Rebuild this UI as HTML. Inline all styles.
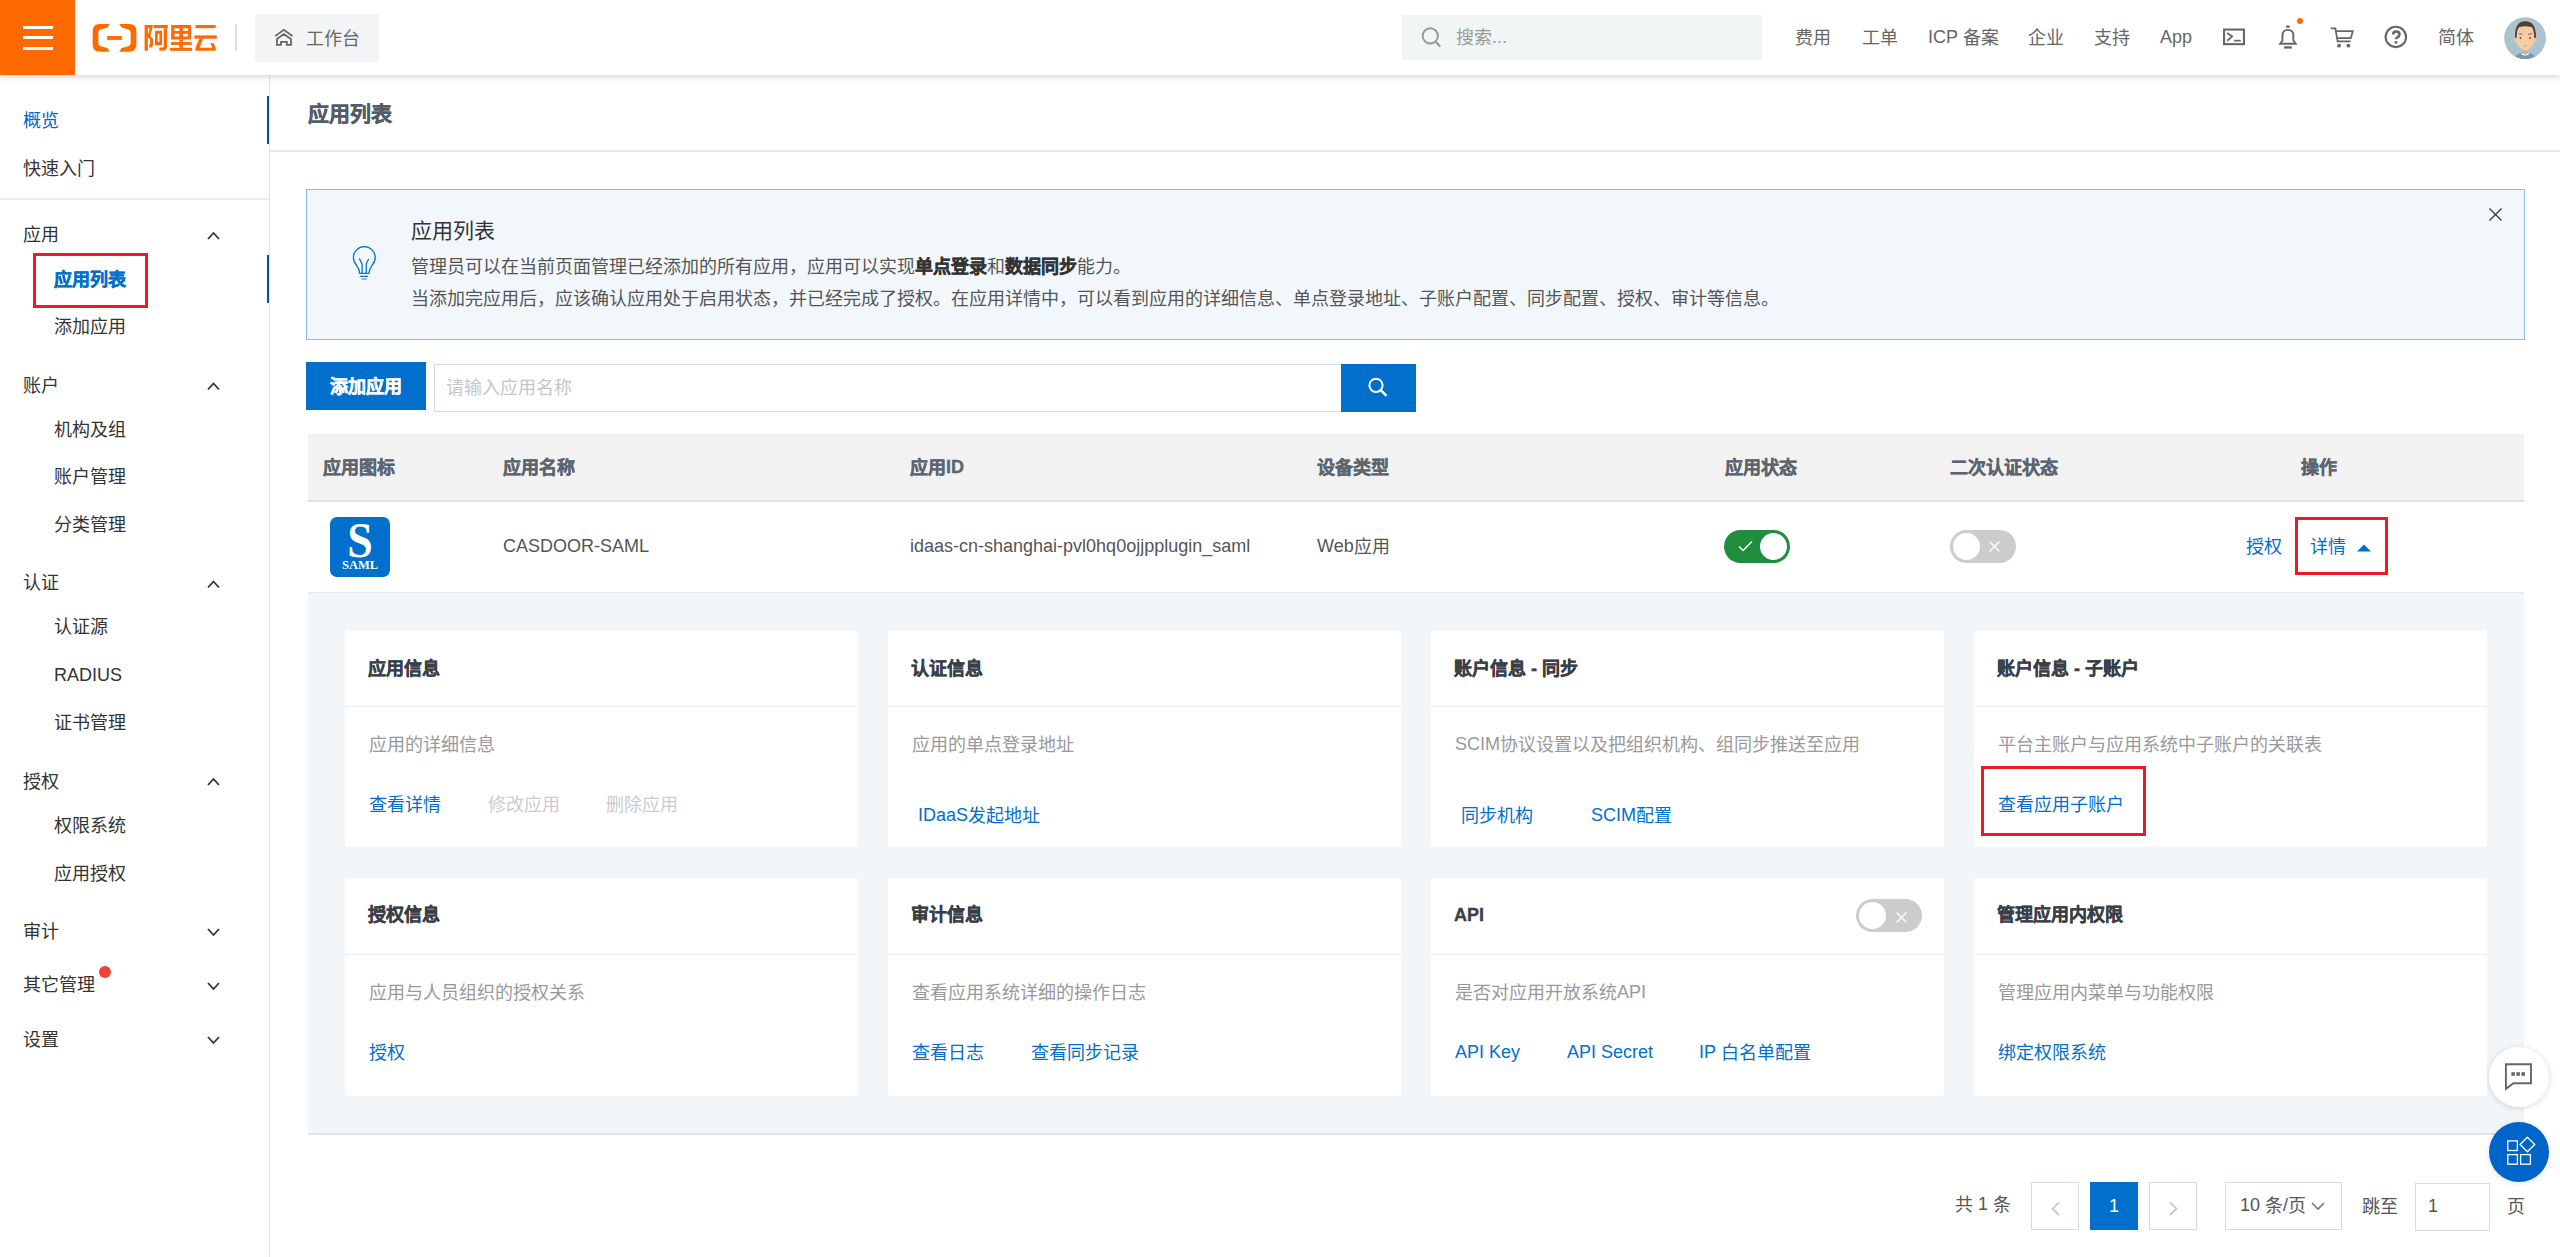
<!DOCTYPE html>
<html lang="zh-CN"><head><meta charset="utf-8">
<style>
*{box-sizing:border-box;margin:0;padding:0}
html,body{width:2560px;height:1257px;overflow:hidden;background:#fff;font-family:"Liberation Sans",sans-serif;color:#333}
.a{position:absolute}
.t{position:absolute;white-space:nowrap;font-size:18px;line-height:18px}
.t,.ct,.cd,.cl{margin-top:1px}
.lat{margin-top:0 !important}
.L{position:relative;top:-1px}
.b,b{font-weight:bold;-webkit-text-stroke-width:0.4px}
.blue{color:#0070cc}
.gray{color:#999}
.nav{color:#666}
.side{color:#333}
.chev{position:absolute;width:12px;height:8px}
.th{color:#5c6470;font-weight:bold;top:458px;-webkit-text-stroke-width:0.35px}
.card{position:absolute;width:513px;background:#fff;border-radius:3px}
.card .hd{position:absolute;left:0;top:75px;width:100%;height:1px;background:#e6eaef}
.ct{position:absolute;white-space:nowrap;font-size:18px;line-height:18px;font-weight:bold;color:#3a3f47;left:23px;top:28px;-webkit-text-stroke-width:0.35px}
.cd{position:absolute;white-space:nowrap;font-size:18px;line-height:18px;color:#999;left:24px;top:104px}
.cl{position:absolute;white-space:nowrap;font-size:18px;line-height:18px;color:#0070cc;top:164px}
.pbox{position:absolute;top:1182px;height:48px;border:1px solid #d5dbe3;background:#fff}
</style></head><body>

<!-- ===== top bar ===== -->
<div class="a" style="left:0;top:0;width:2560px;height:75px;background:#fff;box-shadow:0 2px 6px rgba(0,0,0,.16);z-index:5">
  <div class="a" style="left:0;top:0;width:75px;height:75px;background:#ff6a00">
    <div class="a" style="left:23px;top:26px;width:30px;height:3px;background:#fff"></div>
    <div class="a" style="left:23px;top:36px;width:30px;height:3px;background:#fff"></div>
    <div class="a" style="left:23px;top:47px;width:30px;height:3px;background:#fff"></div>
  </div>
  <svg class="a" style="left:88px;top:18px" width="140" height="40" viewBox="0 0 2560 731">
    <g fill="#ff6a00">
      <path d="M400 108 L215 108 Q85 108 85 240 L85 480 Q85 615 215 615 L400 615 L355 550 L230 515 Q190 500 190 460 L190 260 Q190 222 230 210 L355 175 Z"/>
      <path d="M570 108 L755 108 Q885 108 885 240 L885 480 Q885 615 755 615 L570 615 L615 550 L740 515 Q780 500 780 460 L780 260 Q780 222 740 210 L615 175 Z"/>
      <rect x="350" y="330" width="270" height="70"/>
      <path d="M1035 128 H1190 L1140 330 L1190 385 V480 Q1190 545 1120 545 V485 Q1135 485 1135 460 V395 L1085 340 L1130 185 H1095 V600 H1035 Z"/>
      <rect x="1200" y="128" width="260" height="57"/>
      <path d="M1385 185 H1445 V520 Q1445 600 1360 600 H1305 V540 H1365 Q1385 540 1385 520 Z"/>
      <path fill-rule="evenodd" d="M1225 235 H1355 V500 H1225 Z M1275 290 V440 H1305 V290 Z"/>
      <path fill-rule="evenodd" d="M1520 128 H1885 V395 H1520 Z M1580 185 V238 H1670 V185 Z M1735 185 V238 H1830 V185 Z M1580 290 V340 H1670 V290 Z M1735 290 V340 H1830 V290 Z"/>
      <rect x="1670" y="395" width="65" height="150"/>
      <rect x="1515" y="440" width="380" height="52"/>
      <rect x="1500" y="545" width="405" height="55"/>
      <rect x="1965" y="128" width="370" height="57"/>
      <rect x="1945" y="318" width="410" height="60"/>
      <path d="M2035 378 H2105 L2040 545 H2275 L2235 460 H2300 L2340 565 Q2345 600 2310 600 H1965 V545 Z"/>
    </g>
  </svg>
  
  <div class="a" style="left:235px;top:24px;width:2px;height:27px;background:#ddd"></div>
  <div class="a" style="left:255px;top:14px;width:124px;height:48px;background:#f2f4f5;border-radius:3px"></div>
  <svg class="a" style="left:268px;top:22px" width="30" height="30" viewBox="0 0 30 30">
    <path d="M7.2 14.1 L15.75 7.8 L24.4 14.1" fill="none" stroke="#666" stroke-width="1.8"/>
    <path d="M8.95 22.9 V16.9 L15.75 12.1 L23 16.9 V22.9 H18.8 V19.8 H13 V22.9 Z" fill="none" stroke="#666" stroke-width="1.8"/>
  </svg>
  <div class="t nav" style="left:306px;top:29px">工作台</div>

  <div class="a" style="left:1402px;top:15px;width:360px;height:45px;background:#f2f5f6"></div>
  <svg class="a" style="left:1420px;top:26px" width="22" height="22" viewBox="0 0 22 22">
    <circle cx="10.3" cy="9.9" r="7.6" fill="none" stroke="#999" stroke-width="1.9"/>
    <path d="M15.6 15.6 L19.6 20" stroke="#999" stroke-width="2.2" stroke-linecap="round"/>
  </svg>
  <div class="t" style="left:1456px;top:28px;color:#999">搜索<span class="L">...</span></div>

  <div class="t nav" style="left:1795px;top:28px">费用</div>
  <div class="t nav" style="left:1862px;top:28px">工单</div>
  <div class="t nav" style="left:1928px;top:28px"><span class="L">ICP</span> 备案</div>
  <div class="t nav" style="left:2028px;top:28px">企业</div>
  <div class="t nav" style="left:2094px;top:28px">支持</div>
  <div class="t nav lat" style="left:2160px;top:28px">App</div>

  <svg class="a" style="left:2215px;top:15px" width="200" height="40" viewBox="0 0 200 40">
    <g fill="none" stroke="#666">
      <rect x="9.05" y="14.55" width="19.9" height="14.6" stroke-width="2.1"/>
      <path d="M12.1 17.9 L17.2 21.4 L12.1 25.7" stroke-width="1.8"/>
      <path d="M65.2 28.7 L67.45 25.5 V20.5 Q67.45 14.9 72.9 14.9 Q78.35 14.9 78.35 20.5 V25.5 L80.7 28.7 Z" stroke-width="1.9"/>
      <path d="M115.8 13.4 H120.4 L122.6 26.3 H135.7 M120.9 16.1 H137.8 L135.8 23.2 H122.1" stroke-width="1.8"/>
      <circle cx="180.85" cy="21.9" r="10.2" stroke-width="2.1"/>
      <path d="M178.1 19.6 Q178.1 16.5 181.2 16.5 Q184.5 16.5 184.5 19.3 Q184.5 21 182.3 22.3 Q181 23.1 181 24.3" stroke-width="2.6"/>
    </g>
    <g fill="#666">
      <rect x="19" y="24.8" width="6.8" height="1.7"/>
      <rect x="71" y="10.5" width="3.7" height="2.2"/>
      <rect x="69.1" y="31.3" width="7.7" height="2.3"/>
      <circle cx="124.1" cy="30.7" r="1.9"/><circle cx="133.4" cy="30.7" r="1.9"/>
      <rect x="179.7" y="26.1" width="2.6" height="2.5"/>
    </g>
    <circle cx="85" cy="6" r="3" fill="#ff6a00"/>
  </svg>
  <div class="t nav" style="left:2438px;top:28px">简体</div>
  <svg class="a" style="left:2498px;top:12px" width="54" height="52" viewBox="0 0 54 52">
    <defs><clipPath id="av"><circle cx="27.1" cy="26.1" r="20.9"/></clipPath></defs>
    <circle cx="27.1" cy="26.1" r="20.9" fill="#a9c4cf"/>
    <g clip-path="url(#av)">
      <path d="M15 50 Q17 42 23 41.3 H31.5 Q37.5 42 40 50 Z" fill="#6f9ab4"/>
      <rect x="24.2" y="35" width="6" height="7" fill="#e3a98b"/>
      <path d="M23.5 41.3 Q27.2 43.5 31 41.3 V42.6 Q27.2 44.6 23.5 42.6 Z" fill="#fff"/>
      <ellipse cx="17.6" cy="28" rx="1.6" ry="2.4" fill="#f3c19c"/>
      <ellipse cx="36.9" cy="28" rx="1.6" ry="2.4" fill="#f3c19c"/>
      <path d="M18.8 22 Q18.8 14 27.3 14 Q36 14 36 22 V30.5 Q36 33 33 35.5 L29 38.3 Q27.3 39.3 25.6 38.3 L21.6 35.5 Q18.8 33 18.8 30.5 Z" fill="#f7cba6"/>
      <path d="M17 25.7 Q16.5 9.3 27.3 9.3 Q38.2 9.3 38 25.7 L36.2 25.7 Q36 18 34 15.3 Q27.3 13.3 20.8 15.3 Q18.8 18 18.6 25.7 Z" fill="#5b3a30"/>
      <path d="M20.5 21.7 L24.5 22.3 M30 22.3 L34 21.7" stroke="#7a5a4c" stroke-width="0.9"/>
      <circle cx="22.5" cy="25.9" r="0.9" fill="#5a4035"/><circle cx="32" cy="25.9" r="0.9" fill="#5a4035"/>
      <ellipse cx="27.3" cy="33.9" rx="2.2" ry="0.7" fill="#d9a485"/>
    </g>
  </svg>
</div>

<!-- ===== sidebar ===== -->
<div class="a" style="left:269px;top:75px;width:1px;height:1182px;background:#dfe3ea"></div>
<div class="a" style="left:267px;top:96px;width:2px;height:48px;background:#0a50a0"></div>
<div class="a" style="left:267px;top:255px;width:2px;height:48px;background:#0a50a0"></div>
<div class="a" style="left:0;top:198px;width:269px;height:2px;background:#e7eaee"></div>

<div class="t" style="left:23px;top:111px;color:#0064c8">概览</div>
<div class="t side" style="left:23px;top:159px">快速入门</div>

<div class="t side" style="left:23px;top:225px">应用</div>
<div class="t b" style="left:54px;top:270px;color:#0070cc">应用列表</div>
<div class="a" style="left:33px;top:253px;width:115px;height:55px;border:3px solid #ea1b23"></div>
<div class="t side" style="left:54px;top:317px">添加应用</div>

<div class="t side" style="left:23px;top:376px">账户</div>
<div class="t side" style="left:54px;top:420px">机构及组</div>
<div class="t side" style="left:54px;top:467px">账户管理</div>
<div class="t side" style="left:54px;top:515px">分类管理</div>

<div class="t side" style="left:23px;top:573px">认证</div>
<div class="t side" style="left:54px;top:617px">认证源</div>
<div class="t side lat" style="left:54px;top:666px">RADIUS</div>
<div class="t side" style="left:54px;top:713px">证书管理</div>

<div class="t side" style="left:23px;top:772px">授权</div>
<div class="t side" style="left:54px;top:816px">权限系统</div>
<div class="t side" style="left:54px;top:864px">应用授权</div>

<div class="t side" style="left:23px;top:922px">审计</div>
<div class="t side" style="left:23px;top:975px">其它管理</div>
<div class="a" style="left:99px;top:966px;width:12px;height:12px;border-radius:50%;background:#f04134"></div>
<div class="t side" style="left:23px;top:1030px">设置</div>

<svg class="a" style="left:0;top:0" width="269" height="1257">
  <g fill="none" stroke="#333" stroke-width="1.8">
    <path d="M208 239 L213.5 233 L219 239"/>
    <path d="M208 389.5 L213.5 383.5 L219 389.5"/>
    <path d="M208 587.5 L213.5 581.5 L219 587.5"/>
    <path d="M208 785 L213.5 779 L219 785"/>
    <path d="M208 929 L213.5 935 L219 929"/>
    <path d="M208 983 L213.5 989 L219 983"/>
    <path d="M208 1037 L213.5 1043 L219 1037"/>
  </g>
</svg>

<!-- ===== content ===== -->
<div class="t b" style="left:308px;top:102px;font-size:21px;line-height:21px;color:#545c66">应用列表</div>
<div class="a" style="left:270px;top:150px;width:2290px;height:2px;background:#e8e8e8"></div>

<!-- alert -->
<div class="a" style="left:306px;top:189px;width:2219px;height:151px;background:#f2f7fc;border:1px solid #92b8e8"></div>
<svg class="a" style="left:345px;top:238px" width="40" height="50" viewBox="0 0 40 50">
  <g fill="none" stroke="#0b6fd1" stroke-width="1.3">
    <path d="M14.6 35.3 Q14.6 31 11.6 27.3 A10.9 10.9 0 1 1 27 27.3 Q24 31 24 35.3 Z"/>
    <path d="M14.3 20.5 L17.1 26.2 V35.3 M23.7 21 L21.3 25.8 V35.3"/>
    <path d="M15.1 38.4 H22.9"/>
  </g>
  <path d="M16.3 41 H21.9" stroke="#8e9bd6" stroke-width="1.5"/>
</svg>
<div class="t" style="left:411px;top:219px;font-size:21px;line-height:21px;color:#333">应用列表</div>
<div class="t" style="left:411px;top:257px;color:#555">管理员可以在当前页面管理已经添加的所有应用，应用可以实现<b style="color:#333">单点登录</b>和<b style="color:#333">数据同步</b>能力。</div>
<div class="t" style="left:411px;top:289px;color:#555">当添加完应用后，应该确认应用处于启用状态，并已经完成了授权。在应用详情中，可以看到应用的详细信息、单点登录地址、子账户配置、同步配置、授权、审计等信息。</div>
<svg class="a" style="left:2488px;top:207px" width="15" height="15" viewBox="0 0 15 15">
  <path d="M1.5 1.5 L13.5 13.5 M13.5 1.5 L1.5 13.5" stroke="#333" stroke-width="1.2"/>
</svg>

<!-- toolbar -->
<div class="a" style="left:306px;top:362px;width:120px;height:48px;background:#0070cc"></div>
<div class="t b" style="left:330px;top:377px;color:#fff">添加应用</div>
<div class="a" style="left:434px;top:364px;width:908px;height:48px;border:1px solid #d5dbe3;background:#fff"></div>
<div class="t" style="left:446px;top:378px;color:#c3c7cd">请输入应用名称</div>
<div class="a" style="left:1341px;top:364px;width:75px;height:48px;background:#0070cc"></div>
<svg class="a" style="left:1366px;top:375px" width="24" height="24" viewBox="0 0 24 24">
  <circle cx="10" cy="10.3" r="6.6" fill="none" stroke="#fff" stroke-width="2"/>
  <path d="M14.8 15.2 L20.5 20.8" stroke="#fff" stroke-width="2.4"/>
</svg>

<!-- table header -->
<div class="a" style="left:308px;top:434px;width:2216px;height:66px;background:#f2f2f2"></div>
<div class="a" style="left:308px;top:500px;width:2216px;height:2px;background:#e3e3e3"></div>
<div class="t th" style="left:323px">应用图标</div>
<div class="t th" style="left:503px">应用名称</div>
<div class="t th" style="left:910px">应用<span class="L">ID</span></div>
<div class="t th" style="left:1317px">设备类型</div>
<div class="t th" style="left:1725px">应用状态</div>
<div class="t th" style="left:1950px">二次认证状态</div>
<div class="t th" style="left:2301px">操作</div>

<!-- row -->
<div class="a" style="left:308px;top:592px;width:2216px;height:1px;background:#e6e6e6"></div>
<div class="a" style="left:330px;top:517px;width:60px;height:60px;background:#0070cc;border-radius:7px;overflow:hidden">
  <div class="a" style="left:0;top:0px;width:60px;text-align:center;font:bold 46px/46px 'Liberation Serif',serif;color:#fff;margin-top:-1px;transform:scaleY(1.08);transform-origin:0 0">S</div>
  <div class="a" style="left:0;top:42px;width:60px;text-align:center;font:bold 12.5px/12px 'Liberation Serif',serif;color:#fff">SAML</div>
</div>
<div class="t lat" style="left:503px;top:537px;color:#555">CASDOOR-SAML</div>
<div class="t lat" style="left:910px;top:537px;color:#555">idaas-cn-shanghai-pvl0hq0ojjpplugin_saml</div>
<div class="t" style="left:1317px;top:537px;color:#555"><span class="L">Web</span>应用</div>
<div class="a" style="left:1724px;top:530px;width:66px;height:33px;border-radius:17px;background:#1e8e3e"></div>
<div class="a" style="left:1760px;top:533px;width:27px;height:27px;border-radius:50%;background:#fff"></div>
<svg class="a" style="left:1737px;top:539px" width="17" height="14" viewBox="0 0 17 14">
  <path d="M2 7.5 L6 11.5 L15 2.5" fill="none" stroke="#fff" stroke-width="1.5"/>
</svg>
<div class="a" style="left:1950px;top:530px;width:66px;height:33px;border-radius:17px;background:#ccc"></div>
<div class="a" style="left:1953px;top:533px;width:27px;height:27px;border-radius:50%;background:#fff"></div>
<svg class="a" style="left:1988px;top:540px" width="13" height="13" viewBox="0 0 13 13">
  <path d="M1.5 1.5 L11.5 11.5 M11.5 1.5 L1.5 11.5" stroke="#fff" stroke-width="1.4"/>
</svg>
<div class="t blue" style="left:2246px;top:537px">授权</div>
<div class="t blue" style="left:2310px;top:537px">详情</div>
<svg class="a" style="left:2357px;top:544px" width="14" height="8" viewBox="0 0 14 8"><path d="M0 7.5 L7 0.5 L14 7.5 Z" fill="#0070cc"/></svg>
<div class="a" style="left:2295px;top:517px;width:93px;height:58px;border:3px solid #ea1b23"></div>

<!-- expanded area -->
<div class="a" style="left:308px;top:593px;width:2216px;height:540px;background:#f3f6f9"></div>
<div class="a" style="left:308px;top:1133px;width:2216px;height:2px;background:#e4e4e4"></div>

<!-- row1 cards -->
<div class="card" style="left:345px;top:631px;height:216px">
  <div class="hd"></div>
  <div class="ct">应用信息</div>
  <div class="cd">应用的详细信息</div>
  <div class="cl" style="left:24px">查看详情</div>
  <div class="cl" style="left:143px;color:#ccc">修改应用</div>
  <div class="cl" style="left:261px;color:#ccc">删除应用</div>
</div>
<div class="card" style="left:888px;top:631px;height:216px">
  <div class="hd"></div>
  <div class="ct">认证信息</div>
  <div class="cd">应用的单点登录地址</div>
  <div class="cl" style="left:30px;top:175px"><span class="L">IDaaS</span>发起地址</div>
</div>
<div class="card" style="left:1431px;top:631px;height:216px">
  <div class="hd"></div>
  <div class="ct">账户信息 - 同步</div>
  <div class="cd"><span class="L">SCIM</span>协议设置以及把组织机构、组同步推送至应用</div>
  <div class="cl" style="left:30px;top:175px">同步机构</div>
  <div class="cl" style="left:160px;top:175px"><span class="L">SCIM</span>配置</div>
</div>
<div class="card" style="left:1974px;top:631px;height:216px">
  <div class="hd"></div>
  <div class="ct">账户信息 - 子账户</div>
  <div class="cd">平台主账户与应用系统中子账户的关联表</div>
  <div class="cl" style="left:24px">查看应用子账户</div>
  <div class="a" style="left:7px;top:135px;width:165px;height:70px;border:3px solid #ea1b23"></div>
</div>

<!-- row2 cards -->
<div class="card" style="left:345px;top:878px;height:218px">
  <div class="hd" style="top:76px"></div>
  <div class="ct" style="top:27px">授权信息</div>
  <div class="cd" style="top:105px">应用与人员组织的授权关系</div>
  <div class="cl" style="top:165px;left:24px">授权</div>
</div>
<div class="card" style="left:888px;top:878px;height:218px">
  <div class="hd" style="top:76px"></div>
  <div class="ct" style="top:27px">审计信息</div>
  <div class="cd" style="top:105px">查看应用系统详细的操作日志</div>
  <div class="cl" style="top:165px;left:24px">查看日志</div>
  <div class="cl" style="top:165px;left:143px">查看同步记录</div>
</div>
<div class="card" style="left:1431px;top:878px;height:218px">
  <div class="hd" style="top:76px"></div>
  <div class="ct" style="top:27px">API</div>
  <div class="a" style="left:425px;top:21px;width:66px;height:33px;border-radius:17px;background:#ccc"></div>
  <div class="a" style="left:428px;top:24px;width:27px;height:27px;border-radius:50%;background:#fff"></div>
  <svg class="a" style="left:464px;top:32.5px" width="13" height="13" viewBox="0 0 13 13">
    <path d="M1.5 1.5 L11.5 11.5 M11.5 1.5 L1.5 11.5" stroke="#fff" stroke-width="1.4"/>
  </svg>
  <div class="cd" style="top:105px">是否对应用开放系统<span class="L">API</span></div>
  <div class="cl lat" style="top:165px;left:24px">API Key</div>
  <div class="cl lat" style="top:165px;left:136px">API Secret</div>
  <div class="cl" style="top:165px;left:268px"><span class="L">IP</span> 白名单配置</div>
</div>
<div class="card" style="left:1974px;top:878px;height:218px">
  <div class="hd" style="top:76px"></div>
  <div class="ct" style="top:27px">管理应用内权限</div>
  <div class="cd" style="top:105px">管理应用内菜单与功能权限</div>
  <div class="cl" style="top:165px;left:24px">绑定权限系统</div>
</div>

<!-- pagination -->
<div class="t" style="left:1955px;top:1195px;color:#555">共 <span class="L">1</span> 条</div>
<div class="pbox" style="left:2031px;width:48px"></div>
<svg class="a" style="left:2048px;top:1198px" width="14" height="18" viewBox="0 0 14 18"><path d="M11 4.5 L4.5 10.7 L11 17" fill="none" stroke="#c5cad1" stroke-width="1.8"/></svg>
<div class="a" style="left:2090px;top:1182px;width:48px;height:48px;background:#0070cc"></div>
<div class="t lat" style="left:2090px;top:1197px;width:48px;text-align:center;color:#fff">1</div>
<div class="pbox" style="left:2149px;width:48px"></div>
<svg class="a" style="left:2166px;top:1198px" width="14" height="18" viewBox="0 0 14 18"><path d="M4 4.5 L10.5 10.7 L4 17" fill="none" stroke="#c5cad1" stroke-width="1.8"/></svg>
<div class="pbox" style="left:2225px;width:117px"></div>
<div class="t" style="left:2240px;top:1196px;color:#555"><span class="L">10</span> 条<span class="L">/</span>页</div>
<svg class="a" style="left:2310px;top:1200px" width="16" height="12" viewBox="0 0 16 12"><path d="M2 3 L8 9 L14 3" fill="none" stroke="#777" stroke-width="1.6"/></svg>
<div class="t" style="left:2362px;top:1197px;color:#555">跳至</div>
<div class="pbox" style="left:2415px;top:1183px;width:75px"></div>
<div class="t lat" style="left:2428px;top:1197px;color:#555">1</div>
<div class="t" style="left:2507px;top:1197px;color:#555">页</div>

<!-- floating -->
<div class="a" style="left:2489px;top:1047px;width:60px;height:60px;border-radius:50%;background:#fff;box-shadow:0 1px 6px rgba(0,0,0,.15)"></div>

<div class="a" style="left:2489px;top:1122px;width:60px;height:60px;border-radius:50%;background:#0064c8;box-shadow:0 1px 6px rgba(0,0,0,.12)"></div>
<svg class="a" style="left:2480px;top:1040px" width="80" height="150" viewBox="0 0 80 150">
  <path d="M25.9 24.2 H51 V43.3 H33.5 L25.9 48.8 Z" fill="none" stroke="#666" stroke-width="1.9" stroke-linejoin="miter"/>
  <rect x="31.4" y="32.2" width="3.5" height="3.6" fill="#666"/><rect x="36.4" y="32.2" width="3.5" height="3.6" fill="#666"/><rect x="41.4" y="32.2" width="3.5" height="3.6" fill="#666"/>
  <g fill="none" stroke="#fff" stroke-width="1.3">
    <rect x="27.8" y="100.9" width="9.6" height="9.6"/>
    <rect x="27.8" y="114.6" width="9.6" height="9.6"/>
    <rect x="40.6" y="114.6" width="9.8" height="9.6"/>
    <path d="M47.4 97.2 L54.7 104.5 L47.4 111.8 L40.1 104.5 Z"/>
  </g>
</svg>

</body></html>
